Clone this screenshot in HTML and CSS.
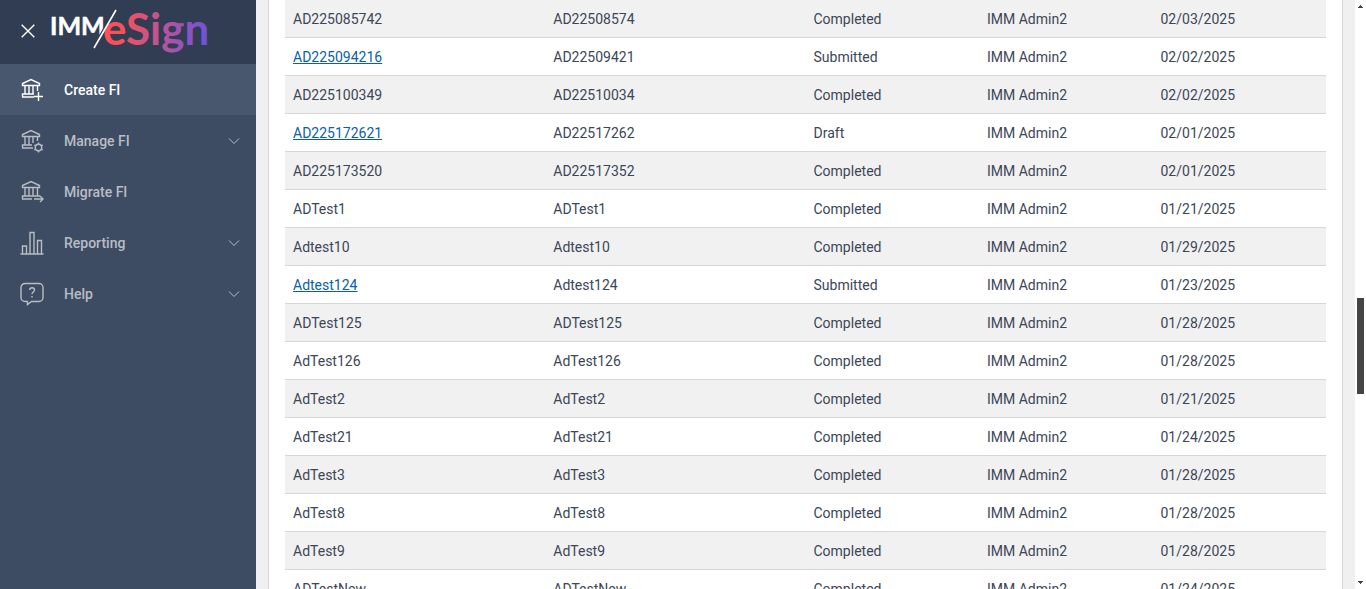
FILE: index.html
```html
<!DOCTYPE html>
<html lang="en">

<head>
  <meta charset="UTF-8" />
  <meta name="viewport" content="width=device-width, initial-scale=1.0" />
  <title>IMM eSign</title>
  <link rel="stylesheet" href="styles.css">
</head>

<body>
  <aside class="sidebar">
    <header class="brand">
      <button class="close-btn" aria-label="Close menu">
        <svg width="14" height="14" viewBox="0 0 14 14"><path d="M.7.7l12.6 12.6M13.3.7L.7 13.3" /></svg>
      </button>
      <svg class="logo" width="160" height="50" viewBox="0 0 160 50" role="img" aria-label="IMM eSign">
        <defs>
          <linearGradient id="brandGradient" gradientUnits="userSpaceOnUse" x1="54" y1="20" x2="156" y2="34">
            <stop offset="0" stop-color="#ff5058" />
            <stop offset="0.15" stop-color="#fb5058" />
            <stop offset="0.6" stop-color="#b553a0" />
            <stop offset="1" stop-color="#6a54dc" />
          </linearGradient>
        </defs>
        <text class="logo-imm" x="-1" y="29">IMM</text>
        <path class="logo-gap" d="M45 42L67 5" />
        <text class="logo-esign" x="52" y="39">eSign</text>
        <path class="logo-slash" d="M43 42L65 4" />
      </svg>
    </header>
    <nav>
      <a class="nav-item active" href="#">
        <svg class="icon" viewBox="0 0 24 24">
          <path d="M2.500 7.500V5.500L11 1.500l8.500 4v2zM5 8v8M9 8v8M13 8v8M17.500 8v5M2.500 18.500v-2.500H14M2 19h12M18.500 14v9M14 18.500h9" />
        </svg>
        <span>Create FI</span>
      </a>
      <a class="nav-item" href="#">
        <svg class="icon" viewBox="0 0 24 24">
          <path d="M2.500 7.500V5.500L11 1.500l8.500 4v2zM5 8v8M9 8v8M13 8v6M17.500 8v4M2.500 18.500v-2.500H12M2 19h11" />
          <circle cx="18.500" cy="18.500" r="3.200" />
          <path d="M18.500 13.500v2M18.500 21.500v2M14.200 16l1.700 1M21.100 20l1.700 1M14.200 21l1.700-1M21.100 17l1.700-1" />
        </svg>
        <span>Manage FI</span>
        <svg class="chevron" viewBox="0 0 12 8"><path d="M1 1.500l5 5 5-5" /></svg>
      </a>
      <a class="nav-item" href="#">
        <svg class="icon" viewBox="0 0 24 24">
          <path d="M2.500 7.500V5.500L11 1.500l8.500 4v2zM5 8v8M9 8v8M13 8v8M17.500 8v8M2.500 19v-3H20M2 19h10M14 19h9M20 16l3 3-3 3" />
        </svg>
        <span>Migrate FI</span>
      </a>
      <a class="nav-item" href="#">
        <svg class="icon" viewBox="0 0 24 24">
          <path d="M.5 23h23M2.500 23v-8h4v8M10 23V1.500h4V23M17.500 23V9.500h4V23" />
        </svg>
        <span>Reporting</span>
        <svg class="chevron" viewBox="0 0 12 8"><path d="M1 1.500l5 5 5-5" /></svg>
      </a>
      <a class="nav-item" href="#">
        <svg class="icon" viewBox="0 0 24 24">
          <path d="M5 1.500h14a4 4 0 0 1 4 4v10a4 4 0 0 1-4 4h-7.500l-4 3v-3H5a4 4 0 0 1-4-4v-10a4 4 0 0 1 4-4z" />
          <path d="M9.700 8c0-3 4.800-3 4.800 0 0 2-2.500 1.900-2.500 4.200M12 14v1.500" />
        </svg>
        <span>Help</span>
        <svg class="chevron" viewBox="0 0 12 8"><path d="M1 1.500l5 5 5-5" /></svg>
      </a>
    </nav>
  </aside>

  <main class="content">
    <section class="panel">
      <table class="fi-table">
        <tbody>
          <tr><td>AD225085742</td><td>AD22508574</td><td>Completed</td><td>IMM Admin2</td><td>02/03/2025</td></tr>
          <tr><td><a href="#">AD225094216</a></td><td>AD22509421</td><td>Submitted</td><td>IMM Admin2</td><td>02/02/2025</td></tr>
          <tr><td>AD225100349</td><td>AD22510034</td><td>Completed</td><td>IMM Admin2</td><td>02/02/2025</td></tr>
          <tr><td><a href="#">AD225172621</a></td><td>AD22517262</td><td>Draft</td><td>IMM Admin2</td><td>02/01/2025</td></tr>
          <tr><td>AD225173520</td><td>AD22517352</td><td>Completed</td><td>IMM Admin2</td><td>02/01/2025</td></tr>
          <tr><td>ADTest1</td><td>ADTest1</td><td>Completed</td><td>IMM Admin2</td><td>01/21/2025</td></tr>
          <tr><td>Adtest10</td><td>Adtest10</td><td>Completed</td><td>IMM Admin2</td><td>01/29/2025</td></tr>
          <tr><td><a href="#">Adtest124</a></td><td>Adtest124</td><td>Submitted</td><td>IMM Admin2</td><td>01/23/2025</td></tr>
          <tr><td>ADTest125</td><td>ADTest125</td><td>Completed</td><td>IMM Admin2</td><td>01/28/2025</td></tr>
          <tr><td>AdTest126</td><td>AdTest126</td><td>Completed</td><td>IMM Admin2</td><td>01/28/2025</td></tr>
          <tr><td>AdTest2</td><td>AdTest2</td><td>Completed</td><td>IMM Admin2</td><td>01/21/2025</td></tr>
          <tr><td>AdTest21</td><td>AdTest21</td><td>Completed</td><td>IMM Admin2</td><td>01/24/2025</td></tr>
          <tr><td>AdTest3</td><td>AdTest3</td><td>Completed</td><td>IMM Admin2</td><td>01/28/2025</td></tr>
          <tr><td>AdTest8</td><td>AdTest8</td><td>Completed</td><td>IMM Admin2</td><td>01/28/2025</td></tr>
          <tr><td>AdTest9</td><td>AdTest9</td><td>Completed</td><td>IMM Admin2</td><td>01/28/2025</td></tr>
          <tr><td>ADTestNew</td><td>ADTestNew</td><td>Completed</td><td>IMM Admin2</td><td>01/24/2025</td></tr>
        </tbody>
      </table>
    </section>
  </main>

  <div class="scrollbar" aria-hidden="true">
    <svg width="5" height="3" viewBox="0 0 5 3"><path d="M2 0h1v1h1v1h1v1H0V2h1V1h1z" /></svg>
    <div class="track">
      <div class="thumb"></div>
    </div>
    <svg width="5" height="3" viewBox="0 0 5 3"><path d="M0 0h5v1H4v1H3v1H2V2H1V1H0z" /></svg>
  </div>
</body>

</html>
```
FILE: styles.css
```css
:root {
  --sidebar: #3d4c63;
  --sidebar-dark: #313d53;
  --sidebar-active: #48576d;
  --nav-text: #b9bdc4;
  --page: #f0f0f0;
  --stripe: #f1f1f1;
  --border: #d5d6d8;
  --text: #3c4656;
  --link: #0a5fa8;
  --white: #ffffff;
}

* {
  box-sizing: border-box;
}

body {
  margin: 0;
  height: 100vh;
  display: flex;
  overflow: hidden;
  background: var(--page);
  color: var(--text);
  font-family: Roboto, sans-serif;
  font-size: 14px;
  line-height: 21px;
}

.sidebar {
  flex: 0 0 256px;
  background: var(--sidebar);
}

.brand {
  display: flex;
  align-items: center;
  gap: 16px;
  height: 64px;
  padding: 0 0 2px 21px;
  background: var(--sidebar-dark);
}

.close-btn {
  display: flex;
  padding: 0;
  border: none;
  background: transparent;
  cursor: pointer;
}

.close-btn path {
  stroke: var(--white);
  stroke-width: 1.4;
}

.logo {
  overflow: visible;
}

.logo-imm,
.logo-esign {
  font-family: Lato, sans-serif;
  font-weight: 700;
}

.logo-imm {
  fill: var(--white);
  stroke: var(--white);
  stroke-width: 0.5;
  font-size: 25px;
}

.logo-esign {
  fill: url(#brandGradient);
  font-size: 44px;
}

.logo-gap {
  stroke: var(--sidebar-dark);
  stroke-width: 8;
}

.logo-slash {
  stroke: var(--white);
  stroke-width: 1.6;
}

.nav-item {
  display: flex;
  align-items: center;
  height: 51px;
  padding: 0 16px 0 20px;
  gap: 20px;
  color: var(--nav-text);
  font-weight: 500;
  text-decoration: none;
}

.nav-item.active {
  background: var(--sidebar-active);
  color: var(--white);
}

.nav-item span {
  padding-top: 2px;
}

.icon,
.chevron {
  fill: none;
  stroke: currentColor;
}

.icon {
  width: 24px;
  height: 24px;
  stroke-width: 1.4;
}

.chevron {
  width: 12px;
  height: 8px;
  margin-left: auto;
}

.content {
  flex: 1;
  min-width: 0;
  padding: 0 12px;
}

.panel {
  padding: 0 16px;
  border: solid var(--border);
  border-width: 0 1px;
  background: var(--white);
}

.fi-table {
  width: 100%;
  table-layout: fixed;
  border-spacing: 0;
}

.fi-table td {
  height: 38px;
  padding: 9px 8px 7px;
  border-bottom: 1px solid var(--border);
}

.fi-table td:nth-child(-n + 2) {
  width: 25%;
}

.fi-table tr:nth-child(odd) {
  background: var(--stripe);
}

.fi-table a {
  color: var(--link);
}

.scrollbar {
  display: flex;
  flex-direction: column;
  align-items: center;
  flex: 0 0 11px;
  padding: 5px 0;
  background: var(--white);
}

.scrollbar svg {
  fill: #444444;
}

.track {
  flex: 1;
  display: grid;
  grid-template-rows: 290fr 96fr 187fr;
}

.thumb {
  grid-row: 2;
  width: 7px;
  background: #444444;
}
```
